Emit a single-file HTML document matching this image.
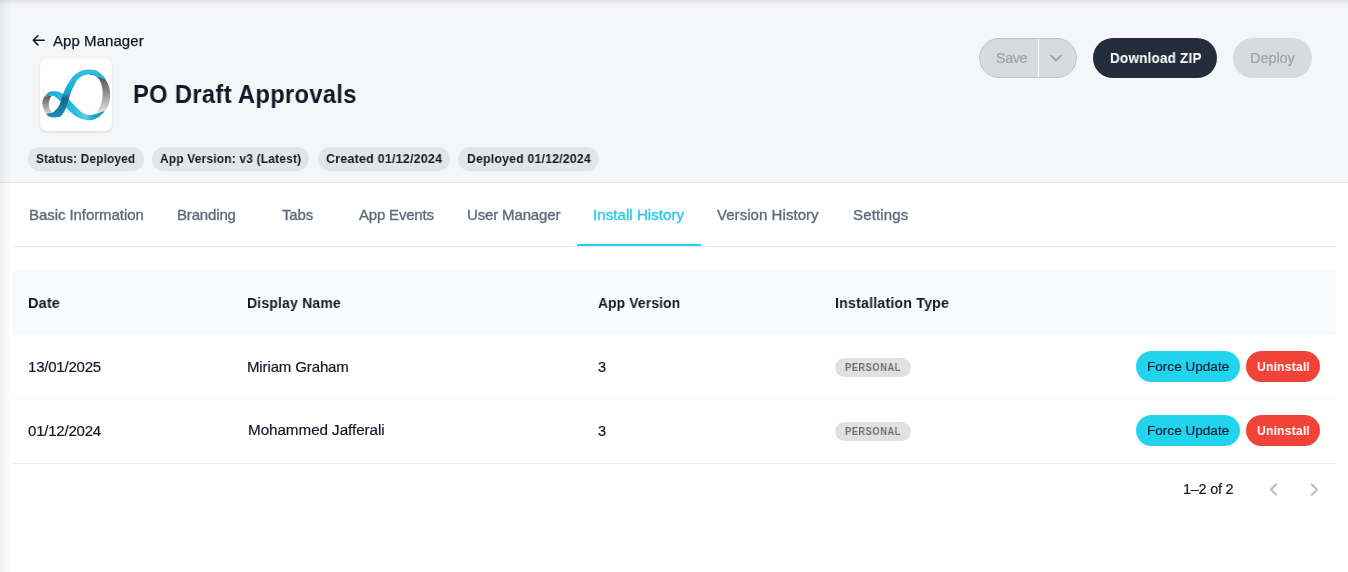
<!DOCTYPE html>
<html><head><meta charset="utf-8"><style>
html,body{margin:0;padding:0;width:1348px;height:572px;overflow:hidden;background:#fff;}
body{position:relative;font-family:"Liberation Sans",sans-serif;}
.b{position:absolute;}
.t{position:absolute;white-space:nowrap;will-change:transform;}
.shl{position:absolute;left:0;top:0;width:12px;height:572px;background:linear-gradient(to right,rgba(0,0,0,0.055),rgba(0,0,0,0.03) 30%,rgba(0,0,0,0.01) 70%,rgba(0,0,0,0));}
.sht{position:absolute;left:0;top:0;width:1348px;height:7px;background:linear-gradient(to bottom,rgba(0,0,0,0.075),rgba(0,0,0,0.04) 35%,rgba(0,0,0,0.01) 75%,rgba(0,0,0,0));}
</style></head><body>
<div class="b" style="left:0px;top:0px;width:1348px;height:182px;background:#f5f6f8"></div><div class="b" style="left:0px;top:182px;width:1348px;height:1px;background:#e3e7ef"></div><div class="b" style="left:40px;top:59px;width:72px;height:72px;background:#fff;border-radius:7px;box-shadow:0 1px 3px rgba(0,0,0,0.12)"></div><div class="b" style="left:28px;top:147px;width:116px;height:24px;background:#e4e5e7;border-radius:12px"></div><div class="b" style="left:152px;top:147px;width:157px;height:24px;background:#e4e5e7;border-radius:12px"></div><div class="b" style="left:318px;top:147px;width:132px;height:24px;background:#e4e5e7;border-radius:12px"></div><div class="b" style="left:458px;top:147px;width:141px;height:24px;background:#e4e5e7;border-radius:12px"></div><div class="b" style="left:979px;top:38px;width:98px;height:40px;background:#d9dadd;border:1px solid #c3c4c7;box-sizing:border-box;border-radius:20px"></div><div class="b" style="left:1038px;top:39px;width:1.3px;height:38px;background:#fff"></div><div class="b" style="left:1093px;top:38px;width:124px;height:40px;background:#242d3c;border-radius:20px"></div><div class="b" style="left:1233px;top:38px;width:79px;height:40px;background:#d9dadc;border-radius:20px"></div><div class="b" style="left:12px;top:246px;width:1324px;height:1px;background:#e8eaed"></div><div class="b" style="left:577px;top:244px;width:124px;height:2px;background:#22d3ee"></div><div class="b" style="left:12px;top:271px;width:1324px;height:64px;background:#f9fafb"></div><div class="b" style="left:12px;top:398px;width:1324px;height:1px;background:#f6f7f8"></div><div class="b" style="left:12px;top:463px;width:1324px;height:1px;background:#ebebeb"></div><div class="b" style="left:835px;top:358px;width:76px;height:19px;background:#e1e1e1;border-radius:10px"></div><div class="b" style="left:1136px;top:351px;width:104px;height:31px;background:#22d3ee;border-radius:16px"></div><div class="b" style="left:1246px;top:351px;width:74px;height:31px;background:#f04438;border-radius:16px"></div><div class="b" style="left:835px;top:422px;width:76px;height:19px;background:#e1e1e1;border-radius:10px"></div><div class="b" style="left:1136px;top:415px;width:104px;height:31px;background:#22d3ee;border-radius:16px"></div><div class="b" style="left:1246px;top:415px;width:74px;height:31px;background:#f04438;border-radius:16px"></div>

<svg class="b" style="left:0;top:0" width="1348" height="572" viewBox="0 0 1348 572">
  <g fill="none" stroke="#111827" stroke-width="1.6" stroke-linecap="round" stroke-linejoin="round">
    <path d="M44.2 40.3H33.3M37.9 35.7L33.3 40.3L37.9 44.9"/>
  </g>
  <path d="M1051.2 55.7L1056 60.5L1060.8 55.7" fill="none" stroke="#a3a3a3" stroke-width="2" stroke-linecap="round" stroke-linejoin="round"/>
  <path d="M1276.2 484.3L1270.9 489.5L1276.2 494.6" fill="none" stroke="#bcbcbc" stroke-width="2" stroke-linecap="round" stroke-linejoin="round"/>
  <path d="M1311.8 484.5L1317.1 489.6L1311.8 494.7" fill="none" stroke="#bcbcbc" stroke-width="2" stroke-linecap="round" stroke-linejoin="round"/>
  <g transform="translate(40,59)">
<defs>
<linearGradient id="gb" x1="0" y1="14" x2="0" y2="56" gradientUnits="userSpaceOnUse"><stop offset="0" stop-color="#444"/><stop offset="0.45" stop-color="#8c8c8c"/><stop offset="1" stop-color="#ececec"/></linearGradient>
<linearGradient id="gd" x1="0" y1="37" x2="0" y2="57" gradientUnits="userSpaceOnUse"><stop offset="0" stop-color="#5a5a5a"/><stop offset="1" stop-color="#e4e4e4"/></linearGradient>
<linearGradient id="gc" x1="4" y1="0" x2="65" y2="0" gradientUnits="userSpaceOnUse"><stop offset="0" stop-color="#1f9fc9"/><stop offset="0.2" stop-color="#22b4dc"/><stop offset="0.5" stop-color="#21bde2"/><stop offset="0.68" stop-color="#5fcde9"/><stop offset="0.8" stop-color="#1caad6"/><stop offset="1" stop-color="#1585b0"/></linearGradient>
<linearGradient id="ga" x1="0" y1="58" x2="0" y2="10" gradientUnits="userSpaceOnUse"><stop offset="0" stop-color="#1b8db6"/><stop offset="0.22" stop-color="#1c7aa2"/><stop offset="0.38" stop-color="#1b5f82"/><stop offset="0.5" stop-color="#20a5cf"/><stop offset="0.7" stop-color="#1db5dd"/><stop offset="1" stop-color="#34c0e4"/></linearGradient>
</defs>
<path d="M50.00 11.20 L50.43 11.20 L50.86 11.19 L51.28 11.16 L51.70 11.13 L52.12 11.09 L52.54 11.06 L52.97 11.05 L53.40 11.05 L53.84 11.08 L54.28 11.15 L54.74 11.25 L55.20 11.40 L55.68 11.60 L56.18 11.83 L56.70 12.10 L57.23 12.41 L57.76 12.74 L58.30 13.09 L58.83 13.46 L59.36 13.84 L59.87 14.23 L60.37 14.62 L60.85 15.01 L61.30 15.40 L61.73 15.78 L62.14 16.17 L62.54 16.55 L62.93 16.94 L63.30 17.34 L63.66 17.76 L64.02 18.18 L64.36 18.62 L64.70 19.08 L65.04 19.56 L65.37 20.07 L65.70 20.60 L66.03 21.16 L66.37 21.75 L66.70 22.37 L67.03 23.00 L67.35 23.66 L67.67 24.33 L67.97 25.01 L68.26 25.71 L68.53 26.41 L68.78 27.11 L69.00 27.81 L69.20 28.50 L69.37 29.20 L69.53 29.90 L69.66 30.62 L69.78 31.34 L69.88 32.06 L69.96 32.79 L70.03 33.53 L70.07 34.26 L70.10 35.00 L70.12 35.73 L70.12 36.47 L70.10 37.20 L70.07 37.94 L70.02 38.69 L69.95 39.45 L69.87 40.21 L69.78 40.98 L69.66 41.74 L69.53 42.49 L69.38 43.23 L69.21 43.96 L69.03 44.67 L68.82 45.35 L68.60 46.00 L68.35 46.63 L68.08 47.25 L67.79 47.85 L67.48 48.43 L67.15 49.00 L66.80 49.55 L66.44 50.09 L66.07 50.60 L65.68 51.10 L65.29 51.59 L64.90 52.05 L64.50 52.50 L64.09 52.92 L63.66 53.31 L63.22 53.68 L62.77 54.02 L62.31 54.34 L61.84 54.66 L61.36 54.96 L60.89 55.26 L60.41 55.56 L59.93 55.86 L59.46 56.17 L59.00 56.50 L57.00 52.50 L57.31 51.96 L57.62 51.43 L57.94 50.91 L58.27 50.39 L58.59 49.87 L58.91 49.34 L59.23 48.81 L59.53 48.28 L59.83 47.73 L60.10 47.17 L60.36 46.59 L60.60 46.00 L60.82 45.39 L61.03 44.77 L61.22 44.13 L61.41 43.48 L61.58 42.82 L61.74 42.16 L61.88 41.48 L62.01 40.80 L62.13 40.11 L62.24 39.41 L62.33 38.71 L62.40 38.00 L62.46 37.28 L62.51 36.54 L62.54 35.79 L62.56 35.02 L62.57 34.24 L62.56 33.47 L62.54 32.69 L62.50 31.93 L62.45 31.17 L62.38 30.42 L62.30 29.70 L62.20 29.00 L62.08 28.31 L61.95 27.63 L61.80 26.95 L61.63 26.28 L61.45 25.62 L61.26 24.97 L61.05 24.34 L60.82 23.72 L60.59 23.13 L60.34 22.56 L60.07 22.02 L59.80 21.50 L59.51 21.01 L59.21 20.54 L58.89 20.09 L58.55 19.66 L58.20 19.25 L57.84 18.86 L57.47 18.49 L57.09 18.14 L56.70 17.82 L56.31 17.52 L55.91 17.25 L55.50 17.00 L55.08 16.78 L54.65 16.61 L54.21 16.47 L53.76 16.36 L53.29 16.27 L52.82 16.19 L52.35 16.13 L51.88 16.08 L51.40 16.02 L50.93 15.96 L50.46 15.89 L50.00 15.80Z" fill="url(#gb)"/>
<path d="M4.20 37.80 L4.06 38.15 L3.92 38.51 L3.76 38.87 L3.61 39.23 L3.46 39.60 L3.31 39.96 L3.16 40.31 L3.02 40.67 L2.89 41.01 L2.78 41.35 L2.68 41.68 L2.60 42.00 L2.53 42.30 L2.48 42.57 L2.44 42.83 L2.40 43.08 L2.38 43.32 L2.37 43.56 L2.37 43.80 L2.37 44.06 L2.39 44.33 L2.42 44.62 L2.45 44.94 L2.50 45.30 L2.55 45.70 L2.61 46.13 L2.68 46.59 L2.76 47.07 L2.85 47.58 L2.95 48.09 L3.06 48.60 L3.18 49.11 L3.32 49.62 L3.46 50.10 L3.62 50.57 L3.80 51.00 L4.00 51.41 L4.21 51.82 L4.45 52.22 L4.70 52.61 L4.96 52.99 L5.24 53.36 L5.52 53.72 L5.80 54.07 L6.08 54.40 L6.36 54.72 L6.64 55.02 L6.90 55.30 L7.16 55.57 L7.41 55.82 L7.65 56.06 L7.90 56.28 L8.15 56.49 L8.39 56.68 L8.64 56.86 L8.90 57.03 L9.16 57.19 L9.43 57.34 L9.71 57.47 L10.00 57.60 L10.30 57.71 L10.61 57.80 L10.94 57.87 L11.27 57.93 L11.60 57.97 L11.94 58.01 L12.29 58.04 L12.63 58.06 L12.98 58.09 L13.32 58.12 L13.66 58.16 L14.00 58.20 L12.60 53.60 L12.34 53.30 L12.07 53.01 L11.80 52.73 L11.52 52.44 L11.24 52.16 L10.96 51.87 L10.69 51.58 L10.44 51.28 L10.20 50.98 L9.97 50.66 L9.77 50.34 L9.60 50.00 L9.45 49.65 L9.32 49.29 L9.20 48.93 L9.10 48.56 L9.01 48.18 L8.94 47.79 L8.88 47.39 L8.84 46.99 L8.81 46.58 L8.79 46.16 L8.79 45.73 L8.80 45.30 L8.83 44.85 L8.87 44.37 L8.94 43.87 L9.01 43.36 L9.11 42.83 L9.21 42.31 L9.33 41.80 L9.45 41.29 L9.58 40.80 L9.72 40.33 L9.86 39.90 L10.00 39.50 L10.15 39.14 L10.31 38.81 L10.48 38.50 L10.66 38.21 L10.85 37.95 L11.04 37.69 L11.23 37.45 L11.43 37.21 L11.63 36.97 L11.82 36.72 L12.01 36.47 L12.20 36.20Z" fill="url(#gd)"/>
<path d="M65.00 52.00 L64.40 52.56 L63.80 53.15 L63.20 53.75 L62.60 54.35 L61.99 54.96 L61.39 55.56 L60.79 56.14 L60.19 56.70 L59.59 57.24 L58.99 57.74 L58.40 58.19 L57.80 58.60 L57.21 58.96 L56.61 59.29 L56.02 59.59 L55.43 59.86 L54.84 60.09 L54.25 60.31 L53.66 60.49 L53.07 60.66 L52.48 60.80 L51.89 60.92 L51.29 61.02 L50.70 61.10 L50.10 61.16 L49.51 61.19 L48.91 61.20 L48.31 61.19 L47.71 61.15 L47.11 61.09 L46.51 61.01 L45.90 60.91 L45.30 60.80 L44.70 60.68 L44.10 60.55 L43.50 60.40 L42.90 60.24 L42.30 60.08 L41.70 59.90 L41.10 59.70 L40.49 59.49 L39.89 59.26 L39.29 59.02 L38.69 58.76 L38.09 58.47 L37.49 58.17 L36.90 57.85 L36.30 57.50 L35.70 57.12 L35.08 56.70 L34.45 56.25 L33.82 55.77 L33.19 55.27 L32.56 54.76 L31.95 54.24 L31.35 53.72 L30.77 53.21 L30.21 52.72 L29.69 52.25 L29.20 51.80 L28.75 51.38 L28.33 50.97 L27.95 50.57 L27.59 50.18 L27.24 49.80 L26.92 49.42 L26.60 49.05 L26.29 48.69 L25.98 48.32 L25.67 47.95 L25.34 47.58 L25.00 47.20 L24.65 46.82 L24.30 46.44 L23.95 46.05 L23.60 45.67 L23.26 45.29 L22.91 44.91 L22.56 44.53 L22.21 44.15 L21.86 43.78 L21.51 43.41 L21.15 43.05 L20.80 42.70 L20.44 42.35 L20.09 42.00 L19.73 41.64 L19.37 41.29 L19.01 40.95 L18.65 40.61 L18.29 40.27 L17.93 39.95 L17.57 39.64 L17.21 39.34 L16.86 39.06 L16.50 38.80 L16.15 38.55 L15.80 38.30 L15.45 38.06 L15.10 37.84 L14.75 37.62 L14.40 37.42 L14.05 37.23 L13.70 37.06 L13.35 36.91 L13.00 36.78 L12.65 36.68 L12.30 36.60 L11.94 36.55 L11.59 36.53 L11.23 36.53 L10.87 36.56 L10.51 36.60 L10.15 36.66 L9.79 36.74 L9.43 36.82 L9.07 36.91 L8.71 37.01 L8.36 37.11 L8.00 37.20 L7.65 37.30 L7.29 37.41 L6.94 37.53 L6.59 37.66 L6.24 37.80 L5.89 37.94 L5.54 38.08 L5.20 38.23 L4.85 38.38 L4.50 38.52 L4.15 38.66 L3.80 38.80 L3.80 38.80 L4.15 38.37 L4.50 37.93 L4.84 37.47 L5.19 37.01 L5.53 36.54 L5.88 36.09 L6.22 35.64 L6.57 35.21 L6.92 34.81 L7.28 34.44 L7.64 34.10 L8.00 33.80 L8.37 33.54 L8.73 33.31 L9.10 33.11 L9.46 32.94 L9.83 32.79 L10.21 32.66 L10.59 32.55 L10.97 32.45 L11.36 32.37 L11.77 32.31 L12.18 32.25 L12.60 32.20 L13.04 32.16 L13.49 32.14 L13.96 32.13 L14.44 32.13 L14.92 32.15 L15.41 32.19 L15.90 32.24 L16.40 32.30 L16.88 32.38 L17.37 32.47 L17.84 32.58 L18.30 32.70 L18.75 32.84 L19.20 32.99 L19.64 33.16 L20.09 33.35 L20.52 33.55 L20.96 33.76 L21.39 33.99 L21.81 34.23 L22.24 34.48 L22.66 34.74 L23.08 35.02 L23.50 35.30 L23.92 35.60 L24.34 35.92 L24.75 36.26 L25.17 36.61 L25.58 36.98 L25.99 37.35 L26.40 37.73 L26.80 38.11 L27.19 38.49 L27.57 38.87 L27.94 39.24 L28.30 39.60 L28.64 39.95 L28.97 40.30 L29.29 40.65 L29.59 41.00 L29.89 41.35 L30.18 41.69 L30.47 42.04 L30.76 42.39 L31.06 42.74 L31.36 43.09 L31.67 43.44 L32.00 43.80 L32.33 44.16 L32.66 44.51 L32.98 44.86 L33.31 45.20 L33.64 45.55 L33.97 45.91 L34.32 46.26 L34.68 46.63 L35.06 47.00 L35.45 47.39 L35.86 47.79 L36.30 48.20 L36.76 48.64 L37.26 49.12 L37.77 49.62 L38.31 50.13 L38.86 50.66 L39.42 51.19 L39.99 51.71 L40.56 52.21 L41.13 52.69 L41.70 53.14 L42.25 53.54 L42.80 53.90 L43.34 54.22 L43.87 54.51 L44.40 54.78 L44.94 55.02 L45.47 55.24 L46.00 55.43 L46.53 55.60 L47.06 55.75 L47.60 55.87 L48.13 55.97 L48.66 56.05 L49.20 56.10 L49.75 56.12 L50.30 56.10 L50.87 56.04 L51.44 55.96 L52.01 55.85 L52.58 55.72 L53.14 55.58 L53.69 55.43 L54.23 55.29 L54.74 55.15 L55.24 55.01 L55.70 54.90 L56.13 54.80 L56.54 54.69 L56.91 54.59 L57.27 54.49 L57.61 54.38 L57.94 54.28 L58.27 54.17 L58.60 54.06 L58.93 53.95 L59.27 53.84 L59.62 53.72 L60.00 53.60 L60.39 53.48 L60.79 53.35 L61.20 53.22 L61.61 53.09 L62.03 52.95 L62.46 52.82 L62.88 52.68 L63.31 52.54 L63.73 52.41 L64.16 52.27 L64.58 52.13 L65.00 52.00Z" fill="url(#gc)"/>
<path d="M6.20 55.00 L6.43 54.93 L6.66 54.86 L6.88 54.80 L7.10 54.73 L7.33 54.66 L7.55 54.59 L7.78 54.52 L8.01 54.45 L8.24 54.39 L8.49 54.32 L8.74 54.26 L9.00 54.20 L9.27 54.15 L9.56 54.11 L9.86 54.08 L10.16 54.06 L10.47 54.04 L10.79 54.01 L11.10 53.98 L11.41 53.94 L11.72 53.89 L12.03 53.81 L12.32 53.72 L12.60 53.60 L12.87 53.46 L13.14 53.29 L13.40 53.10 L13.66 52.90 L13.91 52.69 L14.16 52.46 L14.40 52.23 L14.64 51.99 L14.89 51.74 L15.12 51.49 L15.36 51.24 L15.60 51.00 L15.84 50.76 L16.08 50.51 L16.31 50.26 L16.55 50.00 L16.79 49.74 L17.02 49.47 L17.25 49.21 L17.47 48.93 L17.69 48.66 L17.90 48.37 L18.10 48.09 L18.30 47.80 L18.49 47.51 L18.67 47.21 L18.84 46.91 L19.01 46.60 L19.17 46.29 L19.33 45.97 L19.48 45.66 L19.63 45.33 L19.78 45.01 L19.92 44.67 L20.06 44.34 L20.20 44.00 L20.33 43.66 L20.45 43.33 L20.56 43.01 L20.67 42.68 L20.77 42.35 L20.87 42.01 L20.97 41.66 L21.08 41.29 L21.19 40.90 L21.31 40.50 L21.45 40.06 L21.60 39.60 L21.76 39.10 L21.93 38.57 L22.11 38.00 L22.30 37.41 L22.49 36.81 L22.69 36.19 L22.89 35.56 L23.10 34.93 L23.32 34.30 L23.54 33.69 L23.77 33.08 L24.00 32.50 L24.23 31.94 L24.45 31.40 L24.67 30.87 L24.90 30.34 L25.12 29.83 L25.36 29.31 L25.61 28.78 L25.88 28.24 L26.17 27.69 L26.48 27.12 L26.83 26.53 L27.20 25.90 L27.61 25.23 L28.05 24.51 L28.52 23.76 L29.01 22.98 L29.53 22.19 L30.06 21.39 L30.61 20.59 L31.16 19.82 L31.72 19.07 L32.29 18.36 L32.85 17.70 L33.40 17.10 L33.96 16.55 L34.52 16.03 L35.10 15.55 L35.68 15.09 L36.27 14.66 L36.86 14.26 L37.45 13.88 L38.04 13.52 L38.64 13.19 L39.23 12.87 L39.82 12.58 L40.40 12.30 L40.98 12.04 L41.54 11.81 L42.11 11.60 L42.67 11.41 L43.23 11.25 L43.79 11.10 L44.36 10.97 L44.93 10.87 L45.51 10.78 L46.09 10.70 L46.69 10.64 L47.30 10.60 L47.93 10.57 L48.58 10.55 L49.25 10.55 L49.93 10.56 L50.61 10.59 L51.30 10.64 L51.99 10.71 L52.66 10.80 L53.33 10.92 L53.98 11.05 L54.60 11.21 L55.20 11.40 L55.78 11.62 L56.34 11.87 L56.89 12.15 L57.43 12.45 L57.96 12.78 L58.47 13.13 L58.97 13.49 L59.46 13.86 L59.94 14.24 L60.40 14.63 L60.86 15.01 L61.30 15.40 L61.73 15.79 L62.13 16.20 L62.52 16.62 L62.89 17.04 L63.25 17.48 L63.61 17.93 L63.95 18.37 L64.30 18.82 L64.64 19.27 L64.99 19.72 L65.34 20.16 L65.70 20.60 L65.70 20.60 L65.05 20.38 L64.39 20.16 L63.72 19.94 L63.05 19.72 L62.38 19.50 L61.71 19.28 L61.05 19.05 L60.40 18.84 L59.76 18.62 L59.15 18.41 L58.56 18.20 L58.00 18.00 L57.47 17.80 L56.96 17.59 L56.46 17.38 L55.99 17.17 L55.54 16.96 L55.09 16.76 L54.66 16.57 L54.24 16.39 L53.83 16.21 L53.42 16.06 L53.01 15.92 L52.60 15.80 L52.20 15.70 L51.83 15.60 L51.47 15.52 L51.12 15.46 L50.78 15.40 L50.44 15.36 L50.10 15.33 L49.76 15.31 L49.40 15.31 L49.02 15.32 L48.62 15.35 L48.20 15.40 L47.75 15.46 L47.27 15.53 L46.78 15.61 L46.27 15.70 L45.75 15.81 L45.22 15.93 L44.69 16.07 L44.15 16.23 L43.62 16.41 L43.10 16.62 L42.59 16.85 L42.10 17.10 L41.61 17.39 L41.11 17.71 L40.61 18.06 L40.11 18.44 L39.61 18.84 L39.12 19.25 L38.64 19.68 L38.18 20.11 L37.74 20.54 L37.33 20.97 L36.95 21.39 L36.60 21.80 L36.29 22.20 L36.02 22.60 L35.79 23.00 L35.58 23.40 L35.40 23.81 L35.23 24.21 L35.06 24.62 L34.91 25.03 L34.75 25.44 L34.58 25.86 L34.40 26.28 L34.20 26.70 L33.99 27.12 L33.77 27.53 L33.54 27.94 L33.32 28.35 L33.09 28.76 L32.86 29.18 L32.63 29.61 L32.40 30.05 L32.18 30.50 L31.95 30.98 L31.72 31.48 L31.50 32.00 L31.28 32.55 L31.06 33.13 L30.84 33.72 L30.62 34.34 L30.40 34.97 L30.19 35.62 L29.97 36.27 L29.76 36.94 L29.54 37.60 L29.33 38.27 L29.11 38.94 L28.90 39.60 L28.69 40.27 L28.48 40.97 L28.27 41.68 L28.06 42.40 L27.85 43.13 L27.64 43.85 L27.43 44.57 L27.22 45.27 L27.02 45.95 L26.81 46.60 L26.60 47.22 L26.40 47.80 L26.20 48.34 L26.00 48.85 L25.81 49.33 L25.62 49.79 L25.43 50.23 L25.24 50.65 L25.05 51.06 L24.86 51.45 L24.65 51.84 L24.45 52.23 L24.23 52.61 L24.00 53.00 L23.76 53.40 L23.51 53.80 L23.26 54.20 L23.00 54.60 L22.73 54.99 L22.46 55.37 L22.18 55.73 L21.90 56.08 L21.63 56.41 L21.35 56.70 L21.07 56.97 L20.80 57.20 L20.53 57.39 L20.26 57.55 L19.99 57.67 L19.72 57.77 L19.45 57.84 L19.18 57.89 L18.91 57.93 L18.63 57.97 L18.36 57.99 L18.07 58.02 L17.79 58.06 L17.50 58.10 L17.21 58.15 L16.92 58.20 L16.63 58.24 L16.34 58.29 L16.04 58.32 L15.74 58.36 L15.44 58.38 L15.13 58.40 L14.81 58.42 L14.48 58.42 L14.15 58.42 L13.80 58.40 L13.43 58.38 L13.04 58.35 L12.63 58.32 L12.21 58.28 L11.78 58.24 L11.34 58.18 L10.91 58.12 L10.49 58.04 L10.09 57.95 L9.70 57.85 L9.33 57.73 L9.00 57.60 L8.70 57.45 L8.42 57.27 L8.16 57.08 L7.92 56.87 L7.69 56.64 L7.47 56.41 L7.27 56.17 L7.06 55.93 L6.85 55.69 L6.64 55.45 L6.43 55.22 L6.20 55.00Z" fill="url(#ga)"/>
</g>
</svg>

<div class="t" style="left:53.40px;top:33.10px;font-size:15.0px;line-height:15.0px;letter-spacing:0.062px;font-weight:400;color:#111827;-webkit-text-stroke:0.25px #111827">App Manager</div><div class="t" style="left:133.00px;top:81.61px;font-size:25.5px;line-height:25.5px;letter-spacing:0.35px;font-weight:700;color:#111827;transform-origin:0 0;transform:scaleX(0.9304);">PO Draft Approvals</div><div class="t" style="left:36.20px;top:152.17px;font-size:13.5px;line-height:13.5px;letter-spacing:0.25px;font-weight:700;color:#111827;transform-origin:0 0;transform:scaleX(0.8692);">Status: Deployed</div><div class="t" style="left:160.20px;top:152.17px;font-size:13.5px;line-height:13.5px;letter-spacing:0.25px;font-weight:700;color:#111827;transform-origin:0 0;transform:scaleX(0.8803);">App Version: v3 (Latest)</div><div class="t" style="left:325.80px;top:152.17px;font-size:13.5px;line-height:13.5px;letter-spacing:0.25px;font-weight:700;color:#111827;transform-origin:0 0;transform:scaleX(0.9225);">Created 01/12/2024</div><div class="t" style="left:466.70px;top:152.17px;font-size:13.5px;line-height:13.5px;letter-spacing:0.25px;font-weight:700;color:#111827;transform-origin:0 0;transform:scaleX(0.9063);">Deployed 01/12/2024</div><div class="t" style="left:996.20px;top:50.93px;font-size:14.25px;line-height:14.25px;letter-spacing:-0.330px;font-weight:400;color:#9fa0a2;-webkit-text-stroke:0.2px #9fa0a2">Save</div><div class="t" style="left:1109.60px;top:51.13px;font-size:14.25px;line-height:14.25px;letter-spacing:0.2px;font-weight:700;color:#ffffff;transform-origin:0 0;transform:scaleX(0.9482);">Download ZIP</div><div class="t" style="left:1250.20px;top:50.72px;font-size:14.5px;line-height:14.5px;letter-spacing:-0.066px;font-weight:400;color:#9fa0a2;-webkit-text-stroke:0.2px #9fa0a2">Deploy</div><div class="t" style="left:28.70px;top:207.20px;font-size:15px;line-height:15px;letter-spacing:-0.067px;font-weight:400;color:#606a7c;-webkit-text-stroke:0.35px #606a7c">Basic Information</div><div class="t" style="left:176.80px;top:207.20px;font-size:15px;line-height:15px;letter-spacing:-0.163px;font-weight:400;color:#606a7c;-webkit-text-stroke:0.35px #606a7c">Branding</div><div class="t" style="left:282.00px;top:207.20px;font-size:15px;line-height:15px;letter-spacing:-0.163px;font-weight:400;color:#606a7c;-webkit-text-stroke:0.35px #606a7c">Tabs</div><div class="t" style="left:359.00px;top:207.20px;font-size:15px;line-height:15px;letter-spacing:-0.192px;font-weight:400;color:#606a7c;-webkit-text-stroke:0.35px #606a7c">App Events</div><div class="t" style="left:467.10px;top:207.20px;font-size:15px;line-height:15px;letter-spacing:-0.148px;font-weight:400;color:#606a7c;-webkit-text-stroke:0.35px #606a7c">User Manager</div><div class="t" style="left:593.10px;top:207.20px;font-size:15px;line-height:15px;letter-spacing:0.076px;font-weight:400;color:#22cbe6;-webkit-text-stroke:0.35px #22cbe6">Install History</div><div class="t" style="left:717.40px;top:207.20px;font-size:15px;line-height:15px;letter-spacing:0.052px;font-weight:400;color:#606a7c;-webkit-text-stroke:0.35px #606a7c">Version History</div><div class="t" style="left:852.70px;top:207.20px;font-size:15px;line-height:15px;letter-spacing:0.145px;font-weight:400;color:#606a7c;-webkit-text-stroke:0.35px #606a7c">Settings</div><div class="t" style="left:28.20px;top:296.01px;font-size:14.75px;line-height:14.75px;letter-spacing:0.2px;font-weight:700;color:#111827;transform-origin:0 0;transform:scaleX(0.9794);">Date</div><div class="t" style="left:247.30px;top:296.01px;font-size:14.75px;line-height:14.75px;letter-spacing:0.2px;font-weight:700;color:#111827;transform-origin:0 0;transform:scaleX(0.9468);">Display Name</div><div class="t" style="left:597.80px;top:296.01px;font-size:14.75px;line-height:14.75px;letter-spacing:0.2px;font-weight:700;color:#111827;transform-origin:0 0;transform:scaleX(0.9334);">App Version</div><div class="t" style="left:834.60px;top:296.01px;font-size:14.75px;line-height:14.75px;letter-spacing:0.2px;font-weight:700;color:#111827;transform-origin:0 0;transform:scaleX(0.9614);">Installation Type</div><div class="t" style="left:28.20px;top:359.10px;font-size:15.0px;line-height:15.0px;letter-spacing:-0.208px;font-weight:400;color:#111827;-webkit-text-stroke:0.2px #111827">13/01/2025</div><div class="t" style="left:247.30px;top:358.50px;font-size:15.0px;line-height:15.0px;letter-spacing:-0.129px;font-weight:400;color:#111827;-webkit-text-stroke:0.2px #111827">Miriam Graham</div><div class="t" style="left:598.00px;top:359.52px;font-size:14.5px;line-height:14.5px;letter-spacing:0.000px;font-weight:400;color:#111827;-webkit-text-stroke:0.2px #111827">3</div><div class="t" style="left:844.70px;top:361.90px;font-size:10.75px;line-height:10.75px;letter-spacing:0.5px;font-weight:700;color:#707070;transform-origin:0 0;transform:scaleX(0.8744);">PERSONAL</div><div class="t" style="left:1146.80px;top:360.17px;font-size:13.5px;line-height:13.5px;letter-spacing:0.035px;font-weight:400;color:#0f2130;-webkit-text-stroke:0.2px #0f2130">Force Update</div><div class="t" style="left:1256.60px;top:359.57px;font-size:13.5px;line-height:13.5px;letter-spacing:0.2px;font-weight:700;color:#ffffff;transform-origin:0 0;transform:scaleX(0.8993);">Uninstall</div><div class="t" style="left:28.20px;top:423.10px;font-size:15.0px;line-height:15.0px;letter-spacing:-0.208px;font-weight:400;color:#111827;-webkit-text-stroke:0.2px #111827">01/12/2024</div><div class="t" style="left:247.60px;top:422.49px;font-size:15.25px;line-height:15.25px;letter-spacing:-0.070px;font-weight:400;color:#111827;-webkit-text-stroke:0.2px #111827">Mohammed Jafferali</div><div class="t" style="left:598.00px;top:423.52px;font-size:14.5px;line-height:14.5px;letter-spacing:0.000px;font-weight:400;color:#111827;-webkit-text-stroke:0.2px #111827">3</div><div class="t" style="left:844.70px;top:425.90px;font-size:10.75px;line-height:10.75px;letter-spacing:0.5px;font-weight:700;color:#707070;transform-origin:0 0;transform:scaleX(0.8744);">PERSONAL</div><div class="t" style="left:1146.80px;top:424.17px;font-size:13.5px;line-height:13.5px;letter-spacing:0.035px;font-weight:400;color:#0f2130;-webkit-text-stroke:0.2px #0f2130">Force Update</div><div class="t" style="left:1256.60px;top:423.57px;font-size:13.5px;line-height:13.5px;letter-spacing:0.2px;font-weight:700;color:#ffffff;transform-origin:0 0;transform:scaleX(0.8993);">Uninstall</div><div class="t" style="left:1182.80px;top:481.82px;font-size:14.5px;line-height:14.5px;letter-spacing:-0.274px;font-weight:400;color:#111827;-webkit-text-stroke:0.2px #111827">1–2 of 2</div>
<div class="shl"></div><div class="sht"></div>
</body></html>
